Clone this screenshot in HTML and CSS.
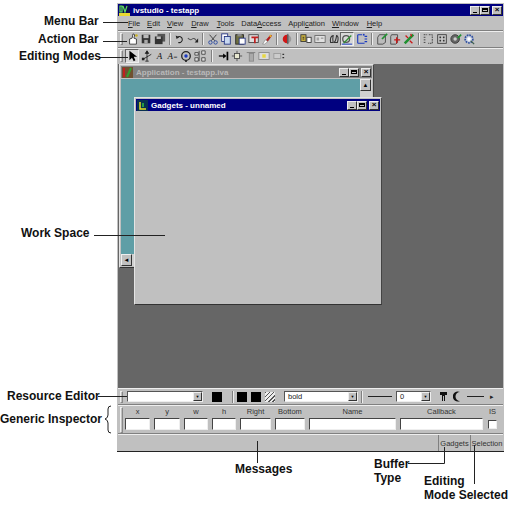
FILE: index.html
```html
<!DOCTYPE HTML>
<html>
<head>
   <meta charset="utf-8">
   <title>ivstudio - annotated</title>
   <link rel="stylesheet" href="styles.css">
</head>
<body>
<div class="page">

   <div class="studio">
      <div class="titlebar">
         <svg class="appicon" width="11" height="11" viewBox="0 0 11 11"><rect width="11" height="11" fill="#0a0a50"/><path d="M1 1h2v6H1zM4 1l2 6 2-6" fill="none" stroke="#5fe05f" stroke-width="1.2"/><rect x="0" y="8" width="11" height="3" fill="#e8d830"/></svg>
         <span class="title">ivstudio - testapp</span>
         <span class="winbtns"><b class="wb min"></b><b class="wb max"></b><b class="wb cls gap">×</b></span>
      </div>

      <div class="menubar">
         <span class="m1"><u>F</u>ile</span><span class="m2"><u>E</u>dit</span><span class="m3"><u>V</u>iew</span><span class="m4"><u>D</u>raw</span><span class="m5"><u>T</u>ools</span><span class="m6">Data<u>A</u>ccess</span><span class="m7">Appli<u>c</u>ation</span><span class="m8"><u>W</u>indow</span><span class="m9"><u>H</u>elp</span>
      </div>

      <div class="toolbar actionbar">
         <i class="grip"></i>
         <svg class="ic" viewBox="0 0 14 14"><path d="M3 13V7l3-1 1-5 2 1-1 4 3 1v6z" fill="#fff" stroke="#333"/><circle cx="11" cy="3" r="1.5" fill="#c8b020"/></svg>
         <svg class="ic" viewBox="0 0 14 14"><rect x="2" y="2" width="10" height="10" fill="#333"/><rect x="4" y="2" width="6" height="4" fill="#bbb"/><rect x="5" y="8" width="4" height="4" fill="#aaa"/></svg>
         <svg class="ic" viewBox="0 0 14 14"><rect x="4" y="1" width="9" height="9" fill="#555"/><rect x="1" y="4" width="9" height="9" fill="#333"/><rect x="3" y="4" width="5" height="3" fill="#bbb"/></svg>
         <i class="sep"></i>
         <svg class="ic" viewBox="0 0 14 14"><path d="M4 5a3.500 3.500 0 1 1 1 6" fill="none" stroke="#222" stroke-width="1.200"/><path d="M2 3l1 4 3-2z" fill="#222"/></svg>
         <svg class="ic" viewBox="0 0 14 14"><path d="M1 6q3 3 5 1t5 2" fill="none" stroke="#555" stroke-width="1.200"/><path d="M13 6v5h-4z" fill="#222"/></svg>
         <i class="sep"></i>
         <svg class="ic" viewBox="0 0 14 14"><circle cx="4" cy="11" r="2" fill="none" stroke="#2040a0"/><circle cx="10" cy="11" r="2" fill="none" stroke="#2040a0"/><path d="M5 9l6-7M9 9L3 2" stroke="#303030"/></svg>
         <svg class="ic" viewBox="0 0 14 14"><rect x="2" y="1" width="7" height="9" fill="#fff" stroke="#203080"/><rect x="5" y="4" width="7" height="9" fill="#c8d8f0" stroke="#203080"/></svg>
         <svg class="ic" viewBox="0 0 14 14"><rect x="2" y="2" width="9" height="11" fill="#707040" stroke="#222"/><rect x="6" y="6" width="7" height="7" fill="#fff" stroke="#203080"/><rect x="4" y="1" width="5" height="3" fill="#888"/></svg>
         <svg class="ic" viewBox="0 0 14 14"><rect x="1" y="2" width="11" height="9" fill="#ddd" stroke="#444"/><path d="M4 5h8M8 5v7" stroke="#c02020" stroke-width="2"/></svg>
         <svg class="ic" viewBox="0 0 14 14"><path d="M2 13l3-5 3 2-4 3z" fill="#fff" stroke="#555" stroke-width=".5"/><path d="M6 8l5-6 2 1-5 7z" fill="#b02020"/><path d="M10 3l2 1" stroke="#e8c020" stroke-width="2"/></svg>
         <i class="sep"></i>
         <svg class="ic" viewBox="0 0 14 14"><path d="M7 2a5 5 0 0 0 0 10z" fill="#d01818"/><path d="M7 2a5 5 0 0 1 0 10" fill="#999"/><path d="M8 1v12" stroke="#333"/></svg>
         <i class="sep"></i>
         <svg class="ic" viewBox="0 0 14 14"><rect x="1" y="2" width="6" height="8" fill="#c8b040" stroke="#333"/><rect x="8" y="5" width="5" height="6" fill="#fff" stroke="#333"/><path d="M3 5h2M3 7h2" stroke="#222"/></svg>
         <svg class="ic" viewBox="0 0 14 14"><rect x="1" y="3" width="12" height="8" fill="#e0e0e0" stroke="#666"/><path d="M3 6h3M3 8h3M8 6h3" stroke="#777"/></svg>
         <svg class="ic" viewBox="0 0 14 14"><path d="M3 11q-1-7 3-8-1 5 0 8zM7 11q2-1 3-8 3 1 1 8z" fill="none" stroke="#333" stroke-width="1.200"/></svg>
         <span class="pressed"><svg class="ic" viewBox="0 0 14 14"><circle cx="6" cy="7" r="4" fill="none" stroke="#555" stroke-width="1.500"/><path d="M3 12l9-9" stroke="#309030" stroke-width="1.500"/><path d="M1 13h12" stroke="#2040c0" stroke-width="1.200"/></svg></span>
         <svg class="ic" viewBox="0 0 14 14"><path d="M2 2h5M2 2v10M2 12h8M10 4h3M10 7h3M10 10h3" fill="none" stroke="#1838c0" stroke-width="1.300"/><rect x="8" y="1" width="2" height="2" fill="#1838c0"/></svg>
         <i class="sep"></i>
         <svg class="ic" viewBox="0 0 14 14"><path d="M4 2h7v9l-3 2H2V5z" fill="#bbb" stroke="#444"/><path d="M7 7l6-6" stroke="#209030" stroke-width="2"/></svg>
         <svg class="ic" viewBox="0 0 14 14"><path d="M3 2h7v9l-2 2H2V4z" fill="#bbb" stroke="#444"/><path d="M6 8h7M9 5v7" stroke="#c81818" stroke-width="1.600"/></svg>
         <svg class="ic" viewBox="0 0 14 14"><path d="M2 12L12 2" stroke="#209030" stroke-width="3"/><path d="M3 3l3 3M8 9l3 3M9 1l1 3" stroke="#c81818" stroke-width="1.500"/></svg>
         <i class="sep"></i>
         <svg class="ic" viewBox="0 0 14 14"><path d="M2 2h4M2 5h3M2 8h3M2 11h3M8 2h4v10H7" fill="none" stroke="#333" stroke-dasharray="2 1"/></svg>
         <svg class="ic" viewBox="0 0 14 14"><rect x="2" y="2" width="10" height="10" fill="#ccc" stroke="#333"/><path d="M4 4h2v2H4zM8 4h2v2H8zM4 8h2v2H4zM8 8h2v2H8z" fill="#333"/></svg>
         <svg class="ic" viewBox="0 0 14 14"><circle cx="6" cy="7" r="5" fill="#666" stroke="#333"/><circle cx="6" cy="7" r="2" fill="#ccc"/><path d="M9 6l4-4" stroke="#209030" stroke-width="2"/></svg>
         <svg class="ic" viewBox="0 0 14 14"><circle cx="7" cy="7" r="4.500" fill="#c8d0e0" stroke="#3050a0" stroke-width="2" stroke-dasharray="2 1"/><circle cx="7" cy="7" r="2" fill="#fff"/><path d="M9 9l4 4" stroke="#406050" stroke-width="1.500"/></svg>
      </div>

      <div class="toolbar editbar">
         <i class="grip"></i>
         <span class="pressed"><svg class="ic" viewBox="0 0 14 14"><path d="M4 1v11l3-3 2 4 2-1-2-4h4z" fill="#000"/></svg></span>
         <svg class="ic" viewBox="0 0 14 14"><path d="M7 1v12M2 11l10-6" stroke="#222"/><path d="M7 1l-2 3h4zM5 13h4" fill="#222" stroke="#222"/><rect x="1" y="9" width="3" height="3" fill="#222"/></svg>
         <span class="tool-a"><em>A</em></span>
         <span class="tool-as"><em>A</em><small>=</small></span>
         <svg class="ic" viewBox="0 0 14 14"><circle cx="7" cy="7" r="5" fill="none" stroke="#222" stroke-width="1.500"/><circle cx="7" cy="7" r="2" fill="#1838c0"/><path d="M7 12v2" stroke="#222" stroke-width="2"/></svg>
         <svg class="ic" viewBox="0 0 14 14"><path d="M1 3h4v3H1zM9 1h4v4H9zM9 9h4v4H9zM1 9h4v4H1z" fill="#ddd" stroke="#444"/><path d="M6 1v12" stroke="#444"/></svg>
         <i class="sep"></i>
         <svg class="ic" viewBox="0 0 14 14"><path d="M1 7h7" stroke="#000" stroke-width="1.500"/><path d="M6 4l4 3-4 3z" fill="#000"/><path d="M11 2v10" stroke="#000" stroke-width="2"/></svg>
         <svg class="ic" viewBox="0 0 14 14"><rect x="4" y="4" width="6" height="6" fill="#e8e8d0" stroke="#444"/><path d="M7 1v3M7 10v3M1 7h3M10 7h3" stroke="#444"/></svg>
         <svg class="ic" viewBox="0 0 14 14"><path d="M2 3h10" stroke="#777"/><rect x="5" y="4" width="5" height="9" fill="#aaa" stroke="#888"/></svg>
         <svg class="ic" viewBox="0 0 14 14"><rect x="1" y="3" width="12" height="8" fill="#ddd" stroke="#888"/><rect x="5" y="5" width="4" height="4" fill="#e8d840"/></svg>
         <svg class="ic wide" viewBox="0 0 14 14"><rect x="1" y="4" width="8" height="6" fill="#ccc" stroke="#999"/><path d="M11 5h2M11 9h2" stroke="#333" stroke-width="1.500"/></svg>
      </div>

      <div class="workspace">
         <div class="mdi app-win">
            <div class="mdi-title inactive">
               <svg width="11" height="11" viewBox="0 0 11 11"><rect width="11" height="11" fill="#705030"/><path d="M2 1v9" stroke="#c02020" stroke-width="2"/><path d="M5 10l4-9" stroke="#30a030" stroke-width="2"/></svg>
               <span>Application - testapp.iva</span>
               <span class="winbtns"><b class="wb min"></b><b class="wb max"></b><b class="wb cls gap">×</b></span>
            </div>
            <div class="app-body">
               <div class="app-client"></div>
               <div class="vscroll"><b class="wb arrow">▲</b></div>
            </div>
            <div class="hscroll"><b class="wb arrow">◄</b></div>
         </div>
         <div class="mdi gadgets-win">
            <div class="mdi-title">
               <svg width="11" height="11" viewBox="0 0 11 11"><rect width="11" height="11" fill="#083050"/><path d="M3 2v7h6" fill="none" stroke="#e8e020" stroke-width="1.500"/><path d="M6 3v4" stroke="#30c040" stroke-width="1.500"/></svg>
               <span>Gadgets - unnamed</span>
               <span class="winbtns"><b class="wb min"></b><b class="wb max"></b><b class="wb cls gap">×</b></span>
            </div>
         </div>
      </div>

      <div class="resbar">
         <i class="grip"></i>
         <span class="combo font-combo"><b class="wb drop">▼</b></span>
         <i class="swatch first"></i>
         <i class="sep"></i>
         <i class="swatch"></i>
         <i class="swatch"></i>
         <i class="swatch hatch"></i>
         <span class="combo weight-combo">bold<b class="wb drop">▼</b></span>
         <i class="sep"></i>
         <i class="rule"></i>
         <span class="combo size-combo">0<b class="wb drop">▼</b></span>
         <svg class="ic-s" viewBox="0 0 9 11"><path d="M1 1h7v3H6v6H5V5H4v5H3V4H1z" fill="#111"/></svg>
         <svg class="ic-s" viewBox="0 0 9 11"><path d="M7 1a5 5 0 1 0 0 9 4 4 0 0 1 0-9z" fill="#111"/></svg>
         <i class="rule short"></i>
         <span class="more">▸</span>
      </div>

      <div class="inspector">
         <i class="grip tall"></i>
         <label class="fld f-x">x<input type="text"></label>
         <label class="fld f-y">y<input type="text"></label>
         <label class="fld f-w">w<input type="text"></label>
         <label class="fld f-h">h<input type="text"></label>
         <label class="fld f-right">Right<input type="text"></label>
         <label class="fld f-bottom">Bottom<input type="text"></label>
         <label class="fld f-name">Name<input type="text"></label>
         <label class="fld f-callback">Callback<input type="text"></label>
         <label class="fld f-is">IS<input type="checkbox"></label>
      </div>

      <div class="statusbar">
         <span class="pane messages"></span>
         <span class="pane buffer">Gadgets</span>
         <span class="pane mode">Selection</span>
      </div>
   </div>

   <!-- callouts -->
   <svg class="leaders" width="511" height="515" viewBox="0 0 511 515">
      <path d="M103 22.500H128M103 41.500H127M100 57.500H128M94 235.500H165M98 396.500H127M257.500 441V463M408 463.500H444.500V447M474.500 445V484" fill="none" stroke="#222"/>
      <path d="M111 406q-3 0-3 3v6q0 3-3 4 3 1 3 4v7q0 3 3 3" fill="none" stroke="#222"/>
   </svg>
   <span class="note n-menu">Menu Bar</span>
   <span class="note n-action">Action Bar</span>
   <span class="note n-edit">Editing Modes</span>
   <span class="note n-work">Work Space</span>
   <span class="note n-res">Resource Editor</span>
   <span class="note n-gen">Generic Inspector</span>
   <span class="note n-msg">Messages</span>
   <span class="note n-buf">Buffer<br>Type</span>
   <span class="note n-mode">Editing<br>Mode Selected</span>
</div>
</body>
</html>
```

FILE: styles.css
```css
html, body {
   margin: 0;
   background: #fff;
}
.page {
   position: relative;
   width: 511px;
   height: 515px;
   overflow: hidden;
   font-family: "Liberation Sans", Arial, sans-serif;
}

/* main window */
.studio {
   display: flex;
   flex-direction: column;
   width: 387px;
   height: 449px;
   margin-left: 117px;
   position: relative;
   top: 3px;
   padding: 1px 1px 0 1px;
   box-sizing: border-box;
   background: #c0c0c0;
   border-bottom: 1px solid #222;
   font-size: 7.5px;
   color: #222;
}
.titlebar {
   display: flex;
   align-items: center;
   height: 12px;
   flex: none;
   padding: 0 1px;
   background: #000080;
   color: #fff;
   font-size: 8px;
   font-weight: bold;
}
.title { margin-left: 3px; }
.appicon { flex: none; }
.winbtns {
   display: flex;
   margin-left: auto;
}
.wb {
   display: flex;
   align-items: center;
   justify-content: center;
   box-sizing: border-box;
   width: 10px;
   height: 9px;
   background: #c0c0c0;
   border: 1px solid;
   border-color: #eee #333 #333 #eee;
   color: #000;
   font-size: 8px;
   line-height: 1;
   font-weight: bold;
}
.wb.gap { margin-left: 2px; }
.wb.min::after {
   content: "";
   width: 4px;
   height: 1px;
   margin-top: 4px;
   background: #000;
}
.wb.max::after {
   content: "";
   width: 6px;
   height: 4px;
   border: 1px solid #000;
   border-top-width: 2px;
   box-sizing: border-box;
}

.menubar {
   display: flex;
   align-items: center;
   height: 14px;
   flex: none;
   border-bottom: 1px solid #808080;
   box-shadow: 0 1px 0 #eee;
   white-space: nowrap;
}
.menubar span { margin-left: 7px; }
.menubar .m1 { margin-left: 10px; }
.menubar .m2 { margin-left: 7px; }
.menubar .m4 { margin-left: 8px; }
.menubar .m5 { margin-left: 8px; }
.menubar .m7 { margin-left: 7px; }
.menubar .m9 { margin-left: 8px; }

.toolbar {
   display: flex;
   align-items: center;
   flex: none;
   padding-left: 2px;
}
.actionbar {
   height: 16px;
   border-bottom: 1px solid #808080;
   box-shadow: 0 1px 0 #eee;
}
.editbar { height: 14px; margin-top: 1px; }
.grip {
   flex: none;
   width: 3px;
   height: 12px;
   margin-right: 3px;
   border: 1px solid;
   border-color: #eee #888 #888 #eee;
   box-sizing: border-box;
}
.editbar .grip { margin-right: 2px; }
.grip.tall { height: 26px; }
.ic {
   flex: none;
   width: 12px;
   height: 12px;
   margin: 0 .8px;
}
.ic.wide { width: 14px; }
.sep {
   flex: none;
   width: 2px;
   height: 12px;
   margin: 0 2px;
   border-left: 1px solid #808080;
   border-right: 1px solid #eee;
   box-sizing: border-box;
}
.editbar .sep { margin: 0 4px; }
.resbar .sep { margin: 0 3px; }
.pressed {
   display: flex;
   flex: none;
   background: #d8d8d8;
   border: 1px solid;
   border-color: #666 #eee #eee #666;
   margin: 0 1px 0 0;
}
.pressed .ic { margin: 0; }
.tool-a, .tool-as {
   flex: none;
   width: 12px;
   text-align: center;
   font: italic 9px "Liberation Serif", serif;
   color: #111;
}
.tool-as { width: 14px; }
.tool-a em, .tool-as em { font-style: italic; }
.tool-as small { font-size: 7px; }

/* work area and the child windows */
.workspace {
   flex: 1;
   min-height: 0;
   position: relative;
   background: #666;
   margin-top: 1px;
   border-bottom: 1px solid #eee;
}
.mdi {
   position: absolute;
   box-sizing: border-box;
   background: #c0c0c0;
   border: 1px solid;
   border-color: #e4e4e4 #444 #333 #e4e4e4;
   padding: 1px;
   display: flex;
   flex-direction: column;
}
.app-win {
   left: 1px;
   top: 0;
   width: 255px;
   height: 204px;
}
.gadgets-win {
   left: 16px;
   top: 33px;
   width: 248px;
   height: 208px;
}
.mdi-title {
   display: flex;
   align-items: center;
   flex: none;
   height: 12px;
   padding: 0 1px;
   background: #000080;
   color: #fff;
   font-size: 8px;
   font-weight: bold;
}
.mdi-title span:first-of-type { margin-left: 3px; }
.mdi-title.inactive {
   background: #808080;
   color: #b8b8b8;
}
.mdi-title .winbtns { margin-left: auto; }
.app-body {
   display: flex;
   flex: 1;
   margin-top: 1px;
}
.app-client {
   flex: 1;
   background: #5f9ea6;
}
.vscroll {
   width: 12px;
   flex: none;
   background: #d0d0d0;
}
.hscroll {
   height: 12px;
   flex: none;
   background: #d0d0d0;
}
.wb.arrow {
   width: 11px;
   height: 12px;
   font-size: 6px;
}

/* resource editor row */
.resbar {
   display: flex;
   align-items: center;
   flex: none;
   height: 15px;
   padding-left: 2px;
   border-bottom: 1px solid #808080;
   box-shadow: 0 1px 0 #eee;
}
.resbar .grip { margin-right: 4px; }
.combo {
   display: flex;
   align-items: center;
   flex: none;
   box-sizing: border-box;
   height: 11px;
   padding-left: 3px;
   background: #fff;
   border: 1px solid;
   border-color: #555 #eee #eee #555;
   font-size: 7.5px;
}
.combo .drop {
   margin-left: auto;
   width: 9px;
   font-size: 4px;
}
.font-combo { width: 76px; }
.weight-combo { width: 74px; margin-left: 9px; }
.size-combo { width: 35px; margin-left: 4px; }
.swatch {
   flex: none;
   width: 10px;
   height: 10px;
   margin-right: 4px;
   background: #000;
}
.swatch.first { margin: 0 7px 0 9px; }
.swatch.hatch {
   margin: 0;
   background: repeating-linear-gradient(135deg, #555 0 1px, #eee 1px 3px);
}
.rule {
   flex: none;
   width: 24px;
   height: 1px;
   margin-left: 2px;
   background: #222;
}
.rule.short { width: 17px; margin-left: 5px; }
.ic-s {
   flex: none;
   width: 9px;
   height: 11px;
   margin-left: 5px;
}
.ic-s:first-of-type { margin-left: 8px; }
.more { margin-left: 6px; font-size: 7px; }

/* generic inspector */
.inspector {
   display: flex;
   align-items: flex-start;
   flex: none;
   height: 29px;
   padding: 2px 0 0 2px;
   box-sizing: border-box;
   border-bottom: 1px solid #808080;
   box-shadow: 0 1px 0 #eee;
}
.inspector .grip { margin-right: 2px; }
.fld {
   display: flex;
   flex-direction: column;
   align-items: center;
   flex: none;
   margin-right: 4px;
   line-height: 10px;
   color: #333;
}
.fld input {
   display: block;
   box-sizing: border-box;
   width: 100%;
   height: 12px;
   margin: 1px 0 0;
   padding: 0;
   background: #fff;
   border: 1px solid;
   border-color: #444 #eee #eee #444;
   border-radius: 0;
   appearance: none;
   outline: none;
}
.f-x { width: 25px; }
.f-y { width: 26px; }
.f-w { width: 24px; }
.f-h { width: 24px; }
.f-right { width: 31px; }
.f-bottom { width: 30px; }
.f-name { width: 87px; }
.f-callback { width: 83px; margin-right: 5px; }
.f-is { width: 9px; }
.fld input[type="checkbox"] {
   width: 9px;
   height: 9px;
   margin-top: 3px;
}

/* status line */
.statusbar {
   display: flex;
   flex: none;
   height: 16px;
   align-items: stretch;
   margin-top: 1px;
}
.pane {
   display: flex;
   align-items: center;
   justify-content: center;
   box-sizing: border-box;
   color: #333;
   white-space: nowrap;
}
.messages { flex: 1; }
.buffer {
   width: 33px;
   border-left: 1px solid #808080;
   border-right: 1px solid #808080;
}
.mode { width: 32px; }

/* callouts around the screenshot */
.leaders {
   position: absolute;
   left: 0;
   top: 0;
}
.note {
   position: absolute;
   font-size: 12px;
   font-weight: bold;
   line-height: 14px;
   color: #111;
   white-space: nowrap;
}
.n-menu { left: 44px; top: 14px; }
.n-action { left: 38px; top: 32px; }
.n-edit { left: 19px; top: 49px; }
.n-work { left: 21px; top: 226px; }
.n-res { left: 7px; top: 389px; }
.n-gen { left: 0; top: 412px; }
.n-msg { left: 235px; top: 462px; }
.n-buf { left: 374px; top: 457px; }
.n-mode { left: 424px; top: 474px; }
```
